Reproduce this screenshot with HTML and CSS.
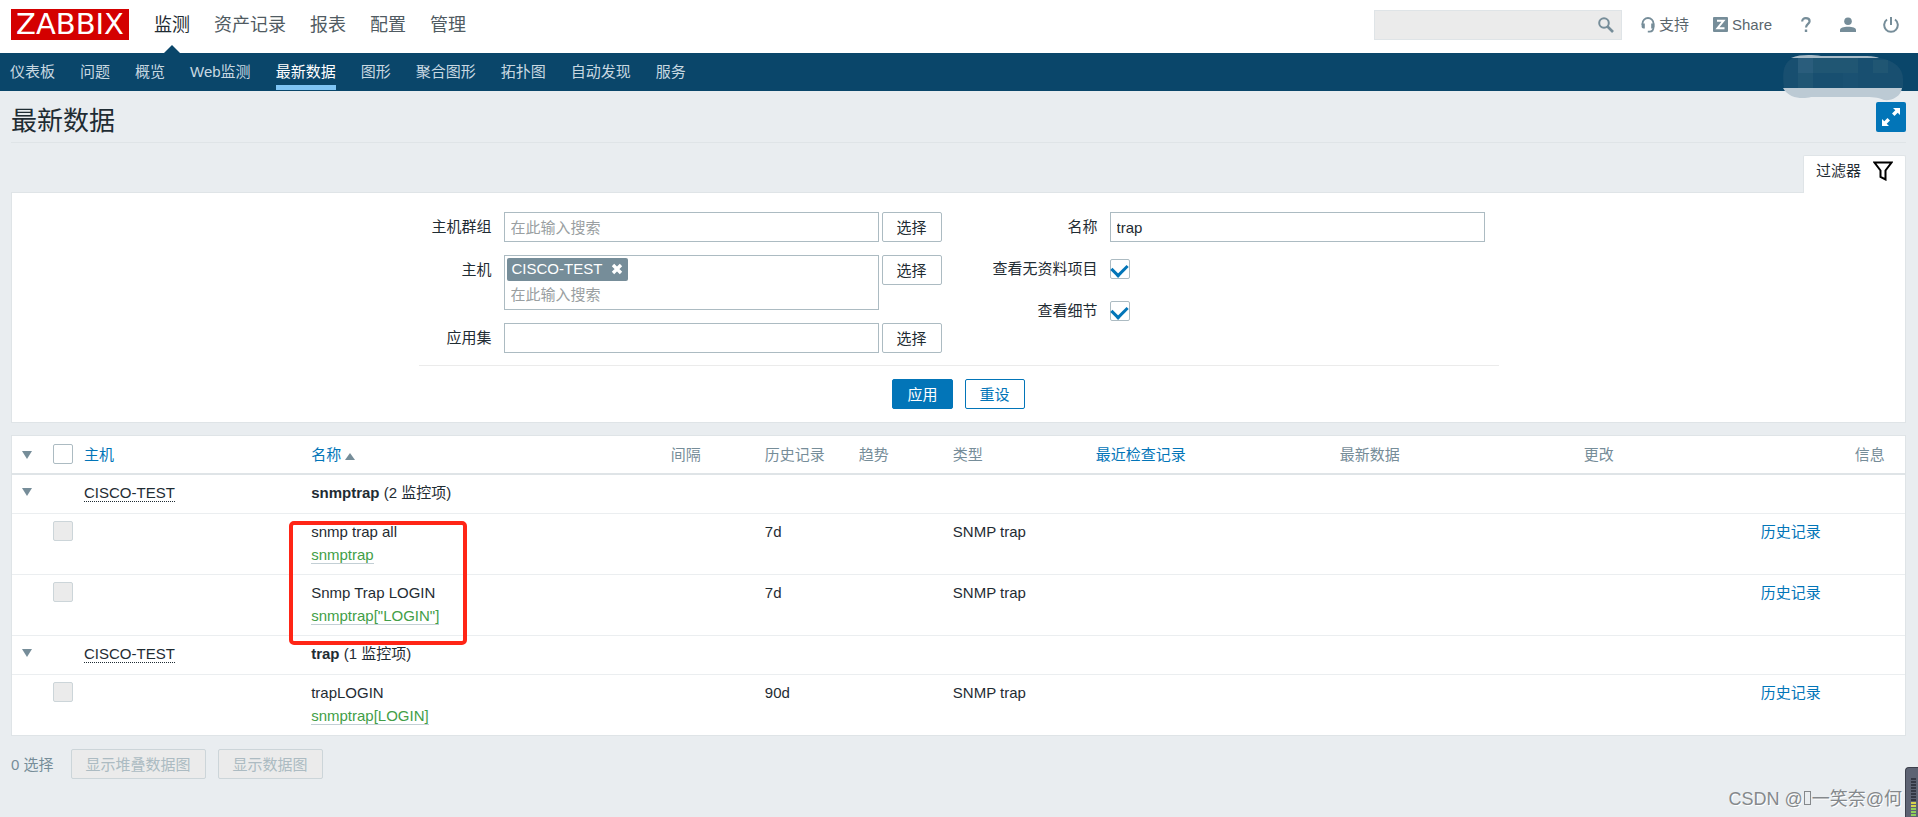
FILE: index.html
```
<!DOCTYPE html>
<html lang="zh-CN">
<head>
<meta charset="utf-8">
<title>最新数据</title>
<link rel="stylesheet" href="styles.css">
</head>
<body>
<header class="top">
  <a class="logo" href="#">ZABBIX</a>
  <nav class="main-nav">
    <a class="active" href="#">监测</a>
    <a href="#">资产记录</a>
    <a href="#">报表</a>
    <a href="#">配置</a>
    <a href="#">管理</a>
  </nav>
  <form class="search">
    <input type="text" aria-label="搜索">
    <button type="button" aria-label="搜索"><svg width="16" height="16" viewBox="0 0 16 16"><circle cx="6" cy="6" r="4.800" fill="none" stroke="#768d99" stroke-width="2"/><path d="M9.500 9.500L15 15" stroke="#768d99" stroke-width="2.600"/></svg></button>
  </form>
  <div class="tools">
    <a href="#"><svg width="14" height="16" viewBox="0 0 14 16"><path d="M1.500 8V6.500a5.500 5.500 0 0 1 11 0V10c0 3-1.500 4.700-4 4.700H6.800" fill="none" stroke="#768d99" stroke-width="1.800"/><path d="M.6 6.500h3.200v5H2.600C1.400 11.500.6 10.700.6 9.500zM13.400 6.500h-3.200v5H11.400c1.200 0 2-.8 2-2z" fill="#768d99"/></svg>支持</a>
    <a class="share" href="#"><svg width="15" height="15" viewBox="0 0 15 15"><rect width="15" height="15" rx="1" fill="#768d99"/><path d="M4 3.800h6.500L4.500 11.200H11.500" fill="none" stroke="#fff" stroke-width="2"/></svg>Share</a>
    <a class="help" href="#" aria-label="帮助"><svg width="10" height="16" viewBox="0 0 10 16"><path d="M1.200 4.500C1.200 2.300 2.700 1.200 4.800 1.200S8.600 2.300 8.600 4.200C8.600 6.800 5 7 5 10.500" fill="none" stroke="#768d99" stroke-width="2.200"/><rect x="3.800" y="12.500" width="2.400" height="2.500" fill="#768d99"/></svg></a>
    <a class="user" href="#" aria-label="用户"><svg width="16" height="16" viewBox="0 0 16 16"><circle cx="8" cy="4.200" r="3.800" fill="#768d99"/><path d="M0 15v-2c0-2 3.500-3.200 8-3.200s8 1.200 8 3.200v2z" fill="#768d99"/></svg></a>
    <a class="power" href="#" aria-label="退出"><svg width="16" height="16" viewBox="0 0 16 16"><path d="M4 2.500a6.800 6.800 0 1 0 8 0M8 0v8" fill="none" stroke="#768d99" stroke-width="2"/></svg></a>
  </div>
</header>
<nav class="sub-nav">
  <a href="#">仪表板</a>
  <a href="#">问题</a>
  <a href="#">概览</a>
  <a href="#">Web监测</a>
  <a class="active" href="#">最新数据</a>
  <a href="#">图形</a>
  <a href="#">聚合图形</a>
  <a href="#">拓扑图</a>
  <a href="#">自动发现</a>
  <a href="#">服务</a>
  <svg class="smudge" width="120" height="46" viewBox="0 0 120 46"><path d="M0 33H119C118 42 108 46 101 45C94 42 90 42 80 42H28C20 44 6 44 0 33Z" fill="#bccad4"/><path d="M8 3C18 -1 30 0 38 1H84C90 1 94 2 96 3Z" fill="#a9bcc8"/><path d="M10 3H96C112 5 120 14 120 24V33H1C-1 18 0 8 10 3Z" fill="#184f70"/><path d="M15 3h15v15H15z" fill="#2a5d7c"/><path d="M30 3h45v15H30zM90 5h15v13H90z" fill="#205673"/><path d="M15 18h15v15H15z" fill="#205674"/><path d="M60 18h15v15H60z" fill="#1a5172"/></svg>
</nav>
<main>
  <div class="title-row">
    <h1>最新数据</h1>
    <button class="fullscreen" type="button" aria-label="全屏"><svg width="20" height="20" viewBox="0 0 20 20"><path d="M12 1h7v7l-2.300-2.300L13.500 9 11 6.500l3.300-3.200zM8 19H1v-7l2.300 2.300L6.500 11 9 13.500l-3.300 3.200z" fill="#fff"/></svg></button>
  </div>
  <div class="filter-tab-row">
    <a class="filter-tab" href="#">过滤器<svg width="20" height="20" viewBox="0 0 20 20"><path d="M1.500 1.500H18.500L12.500 9.500V18.500L7.500 16V9.500Z" fill="none" stroke="#000" stroke-width="2"/></svg></a>
  </div>
  <form class="filter">
    <div class="filter-fields">
      <div class="fields left">
        <div class="field"><label for="groups">主机群组</label><input class="text" id="groups" type="text" placeholder="在此输入搜索"><button class="btn" type="button">选择</button></div>
        <div class="field"><label for="hosts">主机</label>
          <div class="multi"><span class="chip">CISCO-TEST<button type="button" aria-label="移除"><svg width="12" height="12" viewBox="0 0 12 12"><path d="M2 2l8 8M10 2l-8 8" stroke="#fff" stroke-width="3.400"/></svg></button></span><input id="hosts" type="text" placeholder="在此输入搜索"></div>
          <button class="btn" type="button">选择</button></div>
        <div class="field"><label for="app">应用集</label><input class="text" id="app" type="text"><button class="btn" type="button">选择</button></div>
      </div>
      <div class="fields right">
        <div class="field"><label for="name">名称</label><input class="text" id="name" type="text" value="trap"></div>
        <div class="field"><label for="nodata">查看无资料项目</label><input class="check" id="nodata" type="checkbox" checked></div>
        <div class="field"><label for="details">查看细节</label><input class="check" id="details" type="checkbox" checked></div>
      </div>
    </div>
    <div class="filter-actions">
      <button class="btn primary" type="button">应用</button>
      <button class="btn outline" type="button">重设</button>
    </div>
  </form>
  <div class="table-box">
    <table>
      <colgroup><col class="c-toggle"><col class="c-check"><col class="c-host"><col class="c-name"><col class="c-short"><col class="c-short"><col class="c-short"><col class="c-type"><col class="c-last"><col class="c-last"><col class="c-change"><col class="c-short"><col></colgroup>
      <thead>
        <tr><th><button class="toggle" type="button" aria-label="折叠全部"></button></th><th><input class="check" type="checkbox" aria-label="全选"></th><th><a href="#">主机</a></th><th><a href="#">名称<span class="sort"></span></a></th><th>间隔</th><th>历史记录</th><th>趋势</th><th>类型</th><th><a href="#">最近检查记录</a></th><th>最新数据</th><th>更改</th><th></th><th>信息</th></tr>
      </thead>
      <tbody>
        <tr class="group"><td><button class="toggle" type="button" aria-label="折叠"></button></td><td></td><td><a class="host" href="#">CISCO-TEST</a></td><td colspan="10"><b>snmptrap</b> (2 监控项)</td></tr>
        <tr><td></td><td><input class="check" type="checkbox" aria-label="snmp trap all" disabled></td><td></td><td class="marked">snmp trap all<br><a class="key" href="#">snmptrap</a><span class="mark"></span></td><td></td><td>7d</td><td></td><td>SNMP trap</td><td></td><td></td><td></td><td><a href="#">历史记录</a></td><td></td></tr>
        <tr><td></td><td><input class="check" type="checkbox" aria-label="Snmp Trap LOGIN" disabled></td><td></td><td>Snmp Trap LOGIN<br><a class="key" href="#">snmptrap["LOGIN"]</a></td><td></td><td>7d</td><td></td><td>SNMP trap</td><td></td><td></td><td></td><td><a href="#">历史记录</a></td><td></td></tr>
        <tr class="group"><td><button class="toggle" type="button" aria-label="折叠"></button></td><td></td><td><a class="host" href="#">CISCO-TEST</a></td><td colspan="10"><b>trap</b> (1 监控项)</td></tr>
        <tr><td></td><td><input class="check" type="checkbox" aria-label="trapLOGIN" disabled></td><td></td><td>trapLOGIN<br><a class="key" href="#">snmptrap[LOGIN]</a></td><td></td><td>90d</td><td></td><td>SNMP trap</td><td></td><td></td><td></td><td><a href="#">历史记录</a></td><td></td></tr>
      </tbody>
    </table>
  </div>
  <div class="bottom">
    <span>0 选择</span>
    <button class="btn" type="button" disabled>显示堆叠数据图</button>
    <button class="btn" type="button" disabled>显示数据图</button>
  </div>
</main>
<div class="watermark">CSDN @<span class="missing"></span>一笑奈@何</div>
<div class="meter"><span></span></div>
</body>
</html>
```
FILE: styles.css
```
* { box-sizing: border-box; }

body {
  margin: 0;
  min-height: 100vh;
  position: relative;
  overflow: hidden;
  background: #e9edf0;
  color: #1f2c33;
  font: 15px/23px "Liberation Sans", "Noto Sans CJK SC", sans-serif;
}

a { color: #0275b8; text-decoration: none; }
button, input { font: inherit; color: inherit; margin: 0; }
svg { display: block; flex: none; }

.top {
  display: flex;
  align-items: center;
  height: 53px;
  padding: 0 19px 4px 11px;
  background: #fff;
}

.logo {
  width: 118px;
  height: 31px;
  background: #d40000;
  color: #fff;
  font-family: "DejaVu Sans", sans-serif;
  font-size: 29px;
  line-height: 31px;
  text-align: center;
}

.main-nav {
  display: flex;
  gap: 24px;
  margin-left: 25px;
  font-size: 18px;
  line-height: 28px;
}
.main-nav a { color: #505b62; }
.main-nav .active { position: relative; color: #1f2c33; }
.main-nav .active::after {
  content: "";
  position: absolute;
  left: 9px;
  top: 34px;
  border: 9px solid transparent;
  border-top: 0;
  border-bottom-color: #0a466a;
}

.search {
  display: flex;
  align-items: center;
  width: 248px;
  height: 30px;
  margin-left: auto;
  padding-right: 7px;
  border: 1px solid #dfe4e7;
  background: #ebebeb;
}
.search input { flex: 1; min-width: 0; border: 0; background: none; outline: 0; }
.search button { padding: 0; border: 0; background: none; }

.tools { display: flex; align-items: center; margin-left: 19px; }
.tools a { display: flex; align-items: center; gap: 4px; color: #5a666d; }
.tools .share { margin-left: 24px; }
.tools .help { margin-left: 29px; }
.tools .user { margin-left: 29px; }
.tools .power { margin-left: 27px; }

.sub-nav {
  position: relative;
  display: flex;
  gap: 25px;
  height: 38px;
  padding: 0 10px;
  background: #0a466a;
  line-height: 32px;
}
.sub-nav a { height: 37px; padding-top: 3px; color: #c8d8e1; }
.sub-nav .active { border-bottom: 5px solid #7fc5f5; color: #fff; }
.smudge { position: absolute; right: 15px; top: 2px; }

main { padding: 0 12px 0 11px; }

.title-row {
  display: flex;
  justify-content: space-between;
  align-items: center;
  height: 52px;
  border-bottom: 1px solid #dfe4e7;
}
h1 { margin: 0; padding-top: 8px; font-size: 26px; line-height: 32px; font-weight: 400; }
.fullscreen {
  width: 30px;
  height: 30px;
  padding: 5px;
  border: 0;
  border-radius: 2px;
  background: #0275b8;
}

.filter-tab-row { display: flex; justify-content: flex-end; padding-top: 12px; }
.filter-tab {
  position: relative;
  display: flex;
  align-items: center;
  gap: 12px;
  height: 38px;
  margin-bottom: -1px;
  padding: 0 12px 8px;
  border: 1px solid #dfe4e7;
  border-bottom: 0;
  border-radius: 2px 2px 0 0;
  background: #fff;
  color: #1f2c33;
}

.filter { padding: 19px 0 13px; border: 1px solid #dfe4e7; background: #fff; }
.filter-fields {
  display: flex;
  justify-content: space-between;
  width: 1080px;
  max-width: 100%;
  margin: 0 auto;
  padding: 0 14px 12px 0;
  border-bottom: 1px solid #ebebeb;
}
.fields { display: flex; flex-direction: column; }
.left { gap: 13px; }
.right { gap: 12px; }
.field { display: flex; align-items: flex-start; gap: 3px; }
.field label { width: 73px; margin-right: 9px; line-height: 29px; text-align: right; }
.right label { width: 110px; }
.right .field { min-height: 30px; }
.text, .multi { width: 375px; border: 1px solid #acbbc2; background: #fff; }
.text { height: 30px; padding: 0 6px; outline: 0; }
.multi { padding: 2px; }
.multi input { width: 100%; height: 26px; padding: 0 4px; border: 0; outline: 0; display: block; }
::placeholder { color: #9a9fa2; opacity: 1; }
.chip {
  display: inline-flex;
  align-items: center;
  gap: 9px;
  height: 23px;
  padding: 0 5px 2px;
  border-radius: 2px;
  background: #768d99;
  color: #fff;
  vertical-align: top;
}
.chip button { padding: 0; border: 0; background: none; }
.btn {
  height: 30px;
  padding: 0 14px;
  border: 1px solid #acbbc2;
  border-radius: 2px;
  background: #fff;
  white-space: nowrap;
}
.primary { border-color: #0275b8; background: #0275b8; color: #fff; }
.outline { border-color: #0275b8; color: #0275b8; }
.btn:disabled { border-color: #ccd5d9; background: #ebebeb; color: #acbbc2; }

.check {
  appearance: none;
  display: block;
  width: 20px;
  height: 20px;
  border: 1px solid #acbbc2;
  border-radius: 2px;
  background: #fff;
}
.field .check { margin-top: 5px; }
.check:checked {
  display: flex;
  align-items: center;
  justify-content: center;
}
.check:checked::after {
  content: "";
  width: 12px;
  height: 8px;
  margin-bottom: 2px;
  border: solid #0275b8;
  border-width: 0 0 3px 3px;
  transform: rotate(-45deg);
}
.check:disabled { border-color: #ccd5d9; background: #ebebeb; }

.filter-actions { display: flex; justify-content: center; gap: 12px; padding-top: 13px; }

.table-box { margin-top: 12px; border: 1px solid #dfe4e7; background: #fff; }
table { width: 100%; table-layout: fixed; border-collapse: separate; border-spacing: 0; }
.c-toggle { width: 35px; }
.c-check { width: 31px; }
.c-host { width: 12%; }
.c-name { width: 19%; }
.c-short { width: 94px; }
.c-type { width: 143px; }
.c-last { width: 244px; }
.c-change { width: 177px; }
th, td { padding: 7px 0 7px 6px; text-align: left; vertical-align: top; }
th { border-bottom: 2px solid #dfe4e7; color: #768d99; font-weight: 400; }
td { padding: 6px 0 8px 6px; border-bottom: 1px solid #ebeef0; }
td .check { margin-top: 1px; }
.group td { padding-bottom: 9px; }
tbody tr:last-child td { border-bottom: 0; }
.toggle {
  display: block;
  width: 10px;
  height: 8px;
  margin: 7px 0 0 4px;
  padding: 0;
  border: 0;
  background: #768d99;
  clip-path: polygon(0 0, 100% 0, 50% 100%);
}
th .toggle { margin-top: 8px; }
th .check { margin-top: 1px; }
.sort {
  display: inline-block;
  margin-left: 4px;
  border: 5px solid transparent;
  border-top: 0;
  border-bottom: 7px solid #768d99;
}
.host { border-bottom: 1px dotted #1f2c33; color: #1f2c33; }
.key { border-bottom: 1px solid #c3cfd5; color: #429e47; }
.marked { position: relative; }
.mark {
  position: absolute;
  left: -16px;
  top: 7px;
  width: 178px;
  height: 124px;
  border: 4px solid #ff2516;
  border-radius: 5px;
}

.bottom { display: flex; align-items: center; gap: 12px; padding-top: 13px; color: #768d99; }
.bottom span { margin-right: 5px; }

.watermark {
  position: absolute;
  right: 16px;
  bottom: 4px;
  color: #85898c;
  font-size: 18px;
  line-height: 28px;
  text-shadow: 1px 1px 0 #fff;
}
.missing {
  display: inline-block;
  width: 7px;
  height: 14px;
  margin: 0 1px;
  border: 1px solid #85898c;
}
.meter {
  position: absolute;
  right: 0;
  bottom: 0;
  width: 13px;
  height: 50px;
  padding: 9px 2px 0 5px;
  border: 1px solid #3c404c;
  border-width: 1px 0 0 1px;
  border-radius: 4px 0 0 0;
  background: #5d6373;
}
.meter span {
  display: block;
  height: 40px;
  background:
    repeating-linear-gradient(#5d6373 0 1px, transparent 1px 3px),
    linear-gradient(#343844 0 24px, #d5d34c 24px 30px, #8fd05a 30px);
}
```
